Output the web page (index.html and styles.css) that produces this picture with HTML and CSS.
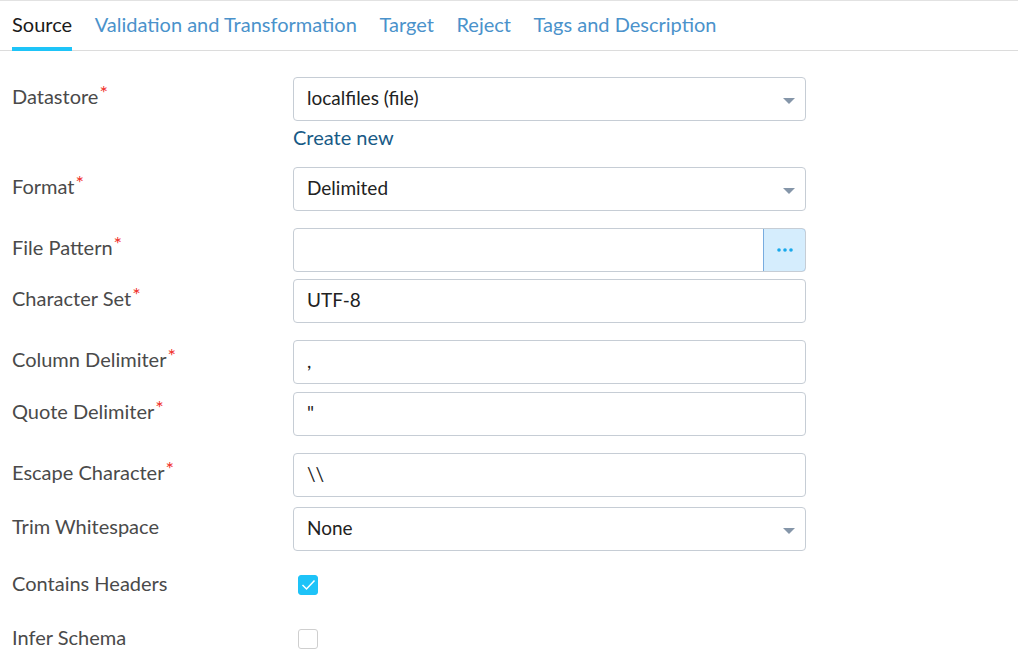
FILE: index.html
```html
<!DOCTYPE html>
<html lang="en">
<head>
<meta charset="utf-8">
<title>Source</title>
<link rel="stylesheet" href="styles.css">
</head>
<body>
<nav class="tabs">
  <a class="tab active">Source</a>
  <a class="tab">Validation and Transformation</a>
  <a class="tab">Target</a>
  <a class="tab">Reject</a>
  <a class="tab">Tags and Description</a>
</nav>
<form class="form">
  <div class="row first">
    <label class="label">Datastore<span class="req">*</span></label>
    <div class="control select">localfiles (file)<span class="caret"></span></div>
  </div>
  <div class="helper"><a class="create">Create new</a></div>
  <div class="row">
    <label class="label">Format<span class="req">*</span></label>
    <div class="control select">Delimited<span class="caret"></span></div>
  </div>
  <div class="row loose">
    <label class="label">File Pattern<span class="req">*</span></label>
    <div class="control group">
      <div class="group-input"></div>
      <button type="button" class="browse">
        <svg width="16" height="4" viewBox="0 0 16 4"><circle cx="2" cy="2" r="1.8"/><circle cx="8" cy="2" r="1.8"/><circle cx="14" cy="2" r="1.8"/></svg>
      </button>
    </div>
  </div>
  <div class="row tight">
    <label class="label">Character Set<span class="req">*</span></label>
    <div class="control">UTF-8</div>
  </div>
  <div class="row loose">
    <label class="label">Column Delimiter<span class="req">*</span></label>
    <div class="control">,</div>
  </div>
  <div class="row">
    <label class="label">Quote Delimiter<span class="req">*</span></label>
    <div class="control">"</div>
  </div>
  <div class="row loose">
    <label class="label">Escape Character<span class="req">*</span></label>
    <div class="control">\\</div>
  </div>
  <div class="row mid">
    <label class="label">Trim Whitespace</label>
    <div class="control select">None<span class="caret"></span></div>
  </div>
  <div class="row check-row">
    <label class="label">Contains Headers</label>
    <span class="checkbox checked">
      <svg width="15" height="12" viewBox="0 0 15 12"><polyline points="1.5,6 5.5,10 13.5,1.5" fill="none" stroke="#fff" stroke-width="1.5"/></svg>
    </span>
  </div>
  <div class="row check-row last">
    <label class="label">Infer Schema</label>
    <span class="checkbox"></span>
  </div>
</form>
</body>
</html>
```
FILE: styles.css
```css
* { box-sizing: border-box; }
html, body { margin: 0; padding: 0; background: #fff; }
body {
  font-family: Lato, "Open Sans", sans-serif;
  font-size: 20px;
  color: #4a4a4a;
  width: 1018px;
  height: 662px;
  overflow: hidden;
}
.tabs {
  display: flex;
  gap: 22.6px;
  height: 51px;
  padding-left: 12px;
  border-top: 1px solid #e2e2e2;
  border-bottom: 1px solid #dcdcdc;
}
.tab {
  display: block;
  padding-top: 11px;
  line-height: 24px;
  color: #4a92cb;
  cursor: pointer;
}
.tab.active {
  color: #1a1a1a;
  border-bottom: 4px solid #1ec4f8;
  margin-bottom: -1px;
}
.form { padding-left: 12px; }
.row {
  display: flex;
  align-items: center;
  margin-top: 8px;
}
.row.first { margin-top: 26px; }
.row.tight { margin-top: 7px; }
.row.loose { margin-top: 17px; }
.row.mid { margin-top: 10px; }
.label {
  width: 281px;
  flex: none;
  color: #4a4a4a;
  line-height: 22px;
  margin-top: -7px;
}
.req {
  color: #f0302a;
  font-size: 20px;
  line-height: 0;
  vertical-align: 4px;
  margin-left: 1px;
}
.control {
  position: relative;
  width: 513px;
  height: 44px;
  border: 1px solid #c6cdd5;
  border-radius: 4px;
  padding: 0 13px 3px;
  display: flex;
  align-items: center;
  color: #222;
  font-size: 19px;
}
.caret {
  position: absolute;
  right: 10px;
  top: 20px;
  width: 0;
  height: 0;
  border-left: 6px solid transparent;
  border-right: 6px solid transparent;
  border-top: 6px solid #8596a9;
}
.helper {
  padding-left: 281px;
  margin-top: 5px;
  line-height: 22px;
}
.create { color: #185a86; cursor: pointer; }
.helper + .row { margin-top: 19px; }
.group { padding: 0; overflow: hidden; }
.group-input { flex: 1; height: 100%; }
.browse {
  width: 43px;
  height: 44px;
  margin: -1px -1px -1px 0;
  border: 1px solid #78acdf;
  border-radius: 0 4px 4px 0;
  background: #d5edfd;
  display: flex;
  align-items: center;
  justify-content: center;
  padding: 0;
  fill: #18a9ec;
}
.check-row { height: 44px; margin-top: 12px; }
.check-row.last { margin-top: 10px; }
.check-row .label { margin-top: -4px; }
.checkbox {
  margin-left: 5px;
  width: 20px;
  height: 20px;
  border-radius: 3px;
  border: 1px solid #cfcfcf;
  display: flex;
  align-items: center;
  justify-content: center;
}
.checkbox.checked {
  background: #1ec3f8;
  border-color: #1ec3f8;
}
```
